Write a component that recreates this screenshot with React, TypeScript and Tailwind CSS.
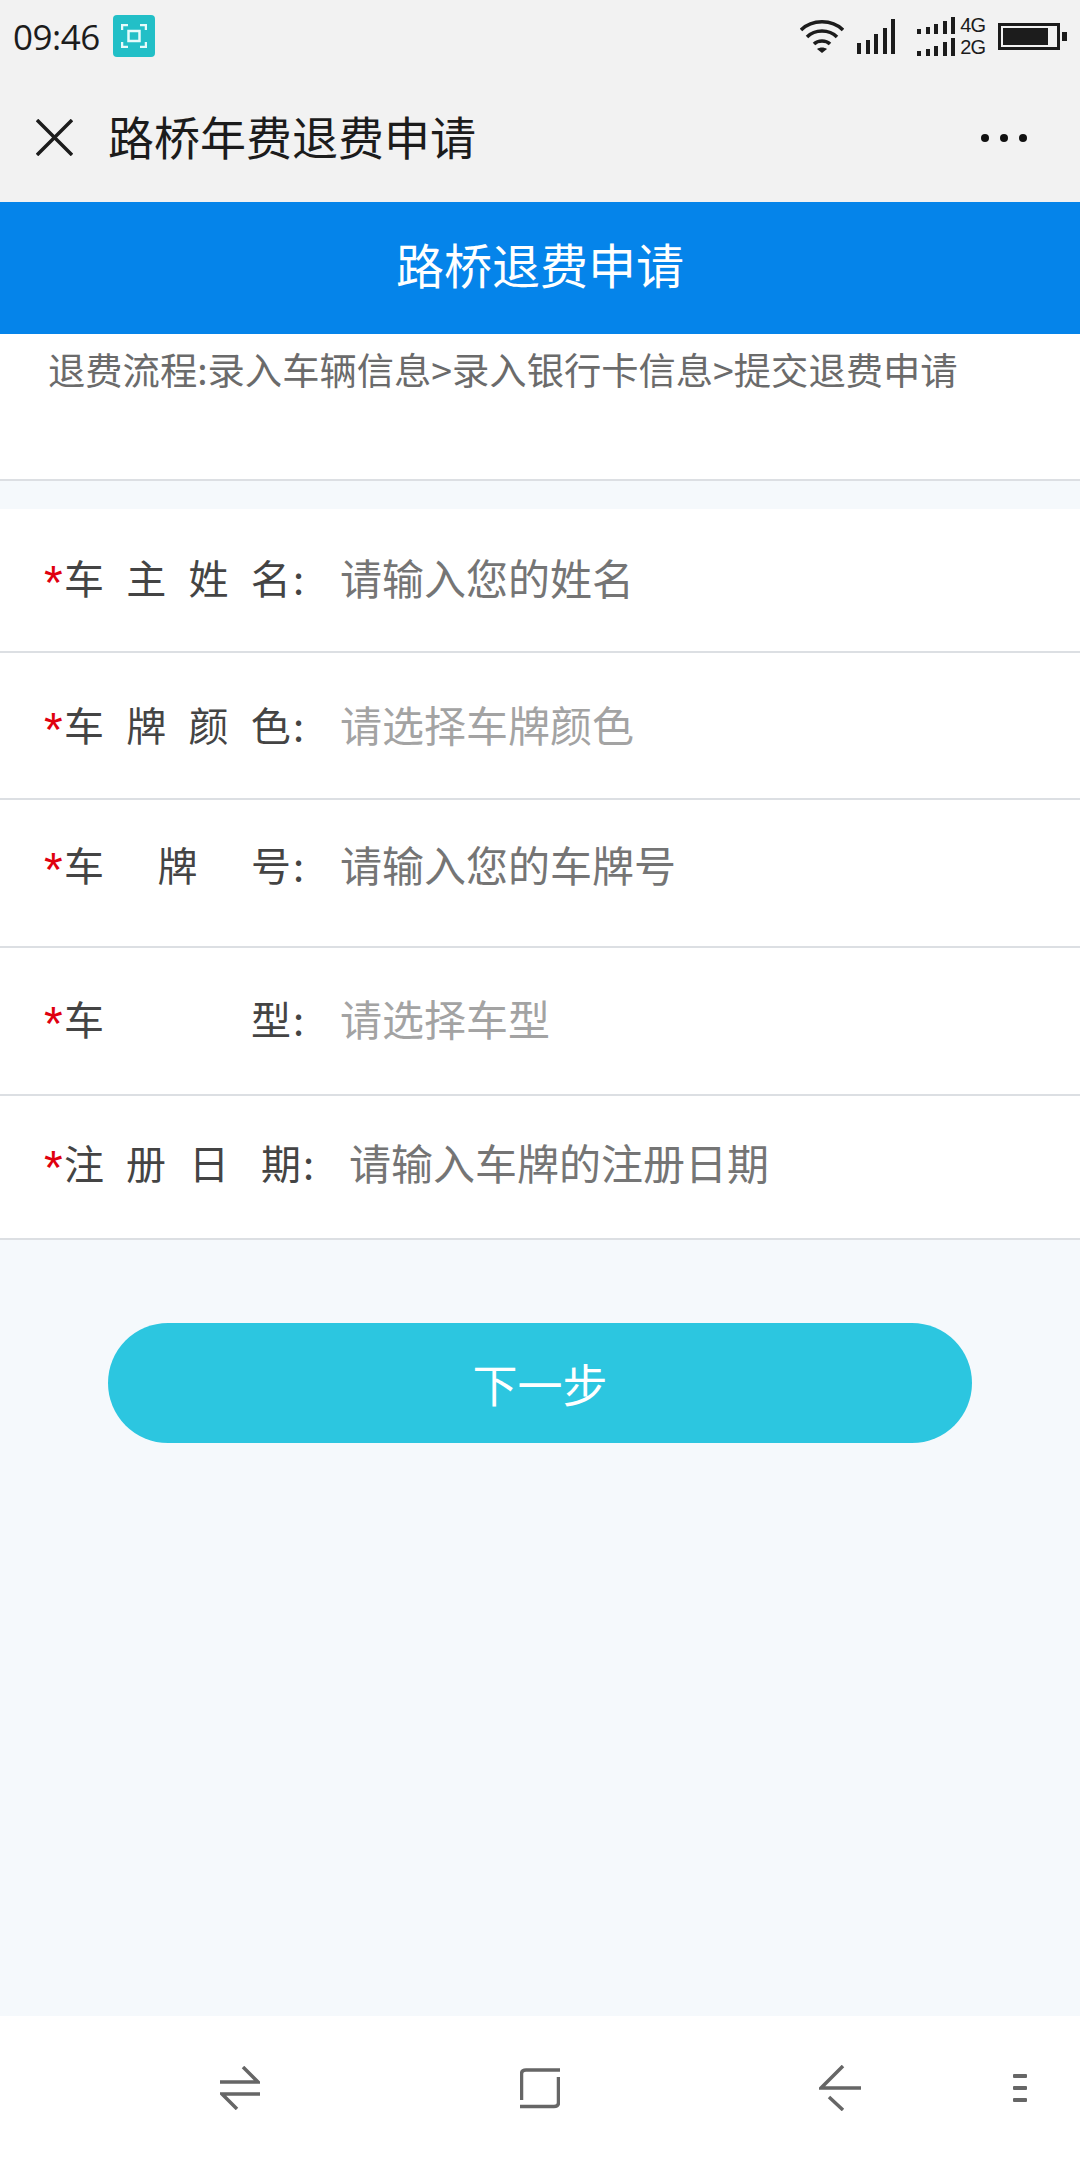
const cjk = "font-['Noto_Sans_CJK_SC','Noto_Sans',sans-serif]"

type Row = {
  chars: string[]
  gaps?: string[]
  width: string
  placeholder: string
  muted?: boolean
  height: string
  lift: string
}

const rows: Row[] = [
  { chars: ['车', '主', '姓', '名'], width: 'w-[240px]', placeholder: '请输入您的姓名', height: 'h-[144px]', lift: 'pb-[6px]' },
  { chars: ['车', '牌', '颜', '色'], width: 'w-[240px]', placeholder: '请选择车牌颜色', muted: true, height: 'h-[147px]', lift: 'pb-[4px]' },
  { chars: ['车', '牌', '号'], width: 'w-[240px]', placeholder: '请输入您的车牌号', height: 'h-[148px]', lift: 'pb-[18px]' },
  { chars: ['车', '型'], width: 'w-[240px]', placeholder: '请选择车型', muted: true, height: 'h-[148px]', lift: 'pb-[6px]' },
  {
    chars: ['注', '册', '日', '期'],
    gaps: ['', 'ml-[22px]', 'ml-[23px]', 'ml-[32px]'],
    width: 'w-[249px]',
    placeholder: '请输入车牌的注册日期',
    height: 'h-[144px]',
    lift: 'pb-[10px]',
  },
]

function StatusBar() {
  return (
    <div className="h-[80px] flex items-center bg-[#f2f2f2] pl-[13px] pr-[13px] pb-[8px]">
      <span className="text-[35px] leading-none tracking-[-0.5px] text-[#1c1c1c] font-['Open_Sans',sans-serif]">09:46</span>
      <div className="ml-[13px] w-[42px] h-[42px] rounded-[4px] bg-[#22bfc7] flex items-center justify-center">
        <svg width="26" height="24" viewBox="0 0 26 24" fill="none" stroke="#e6fbfb" strokeWidth="2.5">
          <path d="M1 6V1h6M19 1h6v5M25 18v5h-6M7 23H1v-5" />
          <rect x="7.5" y="7" width="11" height="10" />
        </svg>
      </div>
      <div className="ml-auto flex items-center">
        <svg width="44" height="34" viewBox="0 0 44 34" fill="none" stroke="#1c1c1c" strokeWidth="3.5">
          <path d="M1 11C12 0 32 0 43 11" />
          <path d="M7 18C15 10 29 10 37 18" />
          <path d="M14 25C18 21 26 21 30 25" />
          <path d="M22 34l-5-4c3-2 7-2 10 0z" fill="#1c1c1c" stroke="none" />
        </svg>
        <svg className="ml-[13px]" width="38" height="35" viewBox="0 0 38 35" fill="#1c1c1c">
          <rect x="0" y="24" width="4" height="11" />
          <rect x="9" y="21" width="4" height="14" />
          <rect x="17" y="15" width="4" height="20" />
          <rect x="26" y="9" width="4" height="26" />
          <rect x="34" y="0" width="4" height="35" />
        </svg>
        <svg className="ml-[22px]" width="38" height="39" viewBox="0 0 38 39" fill="#1c1c1c">
          <rect x="0" y="12" width="4" height="5" />
          <rect x="9" y="10" width="4" height="7" />
          <rect x="17" y="7" width="4" height="10" />
          <rect x="26" y="4" width="4" height="13" />
          <rect x="34" y="0" width="4" height="17" />
          <rect x="0" y="34" width="4" height="5" />
          <rect x="9" y="32" width="4" height="7" />
          <rect x="17" y="29" width="4" height="10" />
          <rect x="26" y="25" width="4" height="14" />
          <rect x="34" y="21" width="4" height="18" />
        </svg>
        <div className="ml-[5px] flex flex-col text-[20px] leading-[22px] tracking-[-1px] text-[#1c1c1c] font-['Liberation_Sans',sans-serif]">
          <span>4G</span>
          <span>2G</span>
        </div>
        <div className="ml-[13px] w-[62px] h-[27px] border-[3px] border-[#1c1c1c] p-[2px]">
          <div className="w-[45px] h-full bg-[#1c1c1c]" />
        </div>
        <div className="ml-[2px] w-[5px] h-[9px] bg-[#1c1c1c]" />
      </div>
    </div>
  )
}

function NavBar() {
  return (
    <div className="h-[122px] flex items-center bg-[#f2f2f2] pl-[36px] pr-[53px] pb-[7px]">
      <svg width="37" height="37" viewBox="0 0 37 37" stroke="#1c1c1c" strokeWidth="3.5" fill="none">
        <path d="M1 1l35 35M36 1L1 36" />
      </svg>
      <span className={`ml-[35px] mb-[5px] text-[46px] leading-none text-[#1c1c1c] ${cjk}`}>路桥年费退费申请</span>
      <div className="ml-auto flex gap-[11px]">
        <span className="w-[8px] h-[8px] rounded-full bg-[#111]" />
        <span className="w-[8px] h-[8px] rounded-full bg-[#111]" />
        <span className="w-[8px] h-[8px] rounded-full bg-[#111]" />
      </div>
    </div>
  )
}

function FormRow({ row }: { row: Row }) {
  return (
    <div className={`${row.height} ${row.lift} flex items-center border-b-2 border-[#dcdfe3] bg-white pl-[44px] text-[40px] leading-none ${cjk}`}>
      <span className="w-[20px] mt-[12px] text-[48px] leading-none text-[#e0000f] font-['Liberation_Sans',sans-serif]">*</span>
      <div className={`${row.width} flex items-center justify-between text-[#444]`}>
        <div className={`flex-1 flex ${row.gaps ? '' : 'justify-between'}`}>
          {row.chars.map((c, i) => (
            <span key={c} className={row.gaps?.[i]}>
              {c}
            </span>
          ))}
        </div>
        <span className="ml-[2px]">:</span>
      </div>
      <span className={`ml-[36px] text-[42px] ${row.muted ? 'text-[#a3a3a3]' : 'text-[#757575]'}`}>{row.placeholder}</span>
    </div>
  )
}

function BottomNav() {
  return (
    <div className="mt-auto h-[144px] bg-white flex items-center pl-[220px] pr-[53px]">
      <svg width="40" height="44" viewBox="0 0 40 44" fill="none" stroke="#666" strokeWidth="3.5">
        <path d="M0 16h38L23 1M40 28H2l15 15" />
      </svg>
      <svg className="ml-[260px]" width="40" height="42" viewBox="0 0 40 42" fill="none" stroke="#666" strokeWidth="3.5">
        <path d="M40 3H6Q1.5 3 1.5 7v26" />
        <path d="M0 39.500h34q4.500 0 4.500-4V10" />
      </svg>
      <svg className="ml-[259px]" width="42" height="46" viewBox="0 0 42 46" fill="none" stroke="#666" strokeWidth="3.5">
        <path d="M24 1L2 23h40M10 32l14 13" />
      </svg>
      <div className="ml-auto flex flex-col gap-[8px]">
        <span className="w-[14px] h-[4px] rounded-[1px] bg-[#666]" />
        <span className="w-[14px] h-[4px] rounded-[1px] bg-[#666]" />
        <span className="w-[14px] h-[4px] rounded-[1px] bg-[#666]" />
      </div>
    </div>
  )
}

export default function App() {
  return (
    <div className="w-[1080px] h-[2160px] flex flex-col bg-[#f5f9fc] overflow-hidden">
      <StatusBar />
      <NavBar />
      <div className={`h-[132px] pb-[10px] bg-[#0584ea] flex items-center justify-center text-white text-[48px] leading-none ${cjk}`}>
        路桥退费申请
      </div>
      <div className={`h-[147px] bg-white border-b-2 border-[#dcdfe3] pl-[48px] pt-[13px] text-[37.3px] leading-[44px] text-[#6b6b6b] ${cjk}`}>
        退费流程:录入车辆信息&gt;录入银行卡信息&gt;提交退费申请
      </div>
      <div className="mt-[28px]">
        {rows.map((row) => (
          <FormRow key={row.placeholder} row={row} />
        ))}
      </div>
      <div className={`mt-[83px] mx-[108px] h-[120px] rounded-full bg-[#2cc6e0] flex items-center justify-center text-white text-[45px] leading-none ${cjk}`}>
        下一步
      </div>
      <BottomNav />
    </div>
  )
}
